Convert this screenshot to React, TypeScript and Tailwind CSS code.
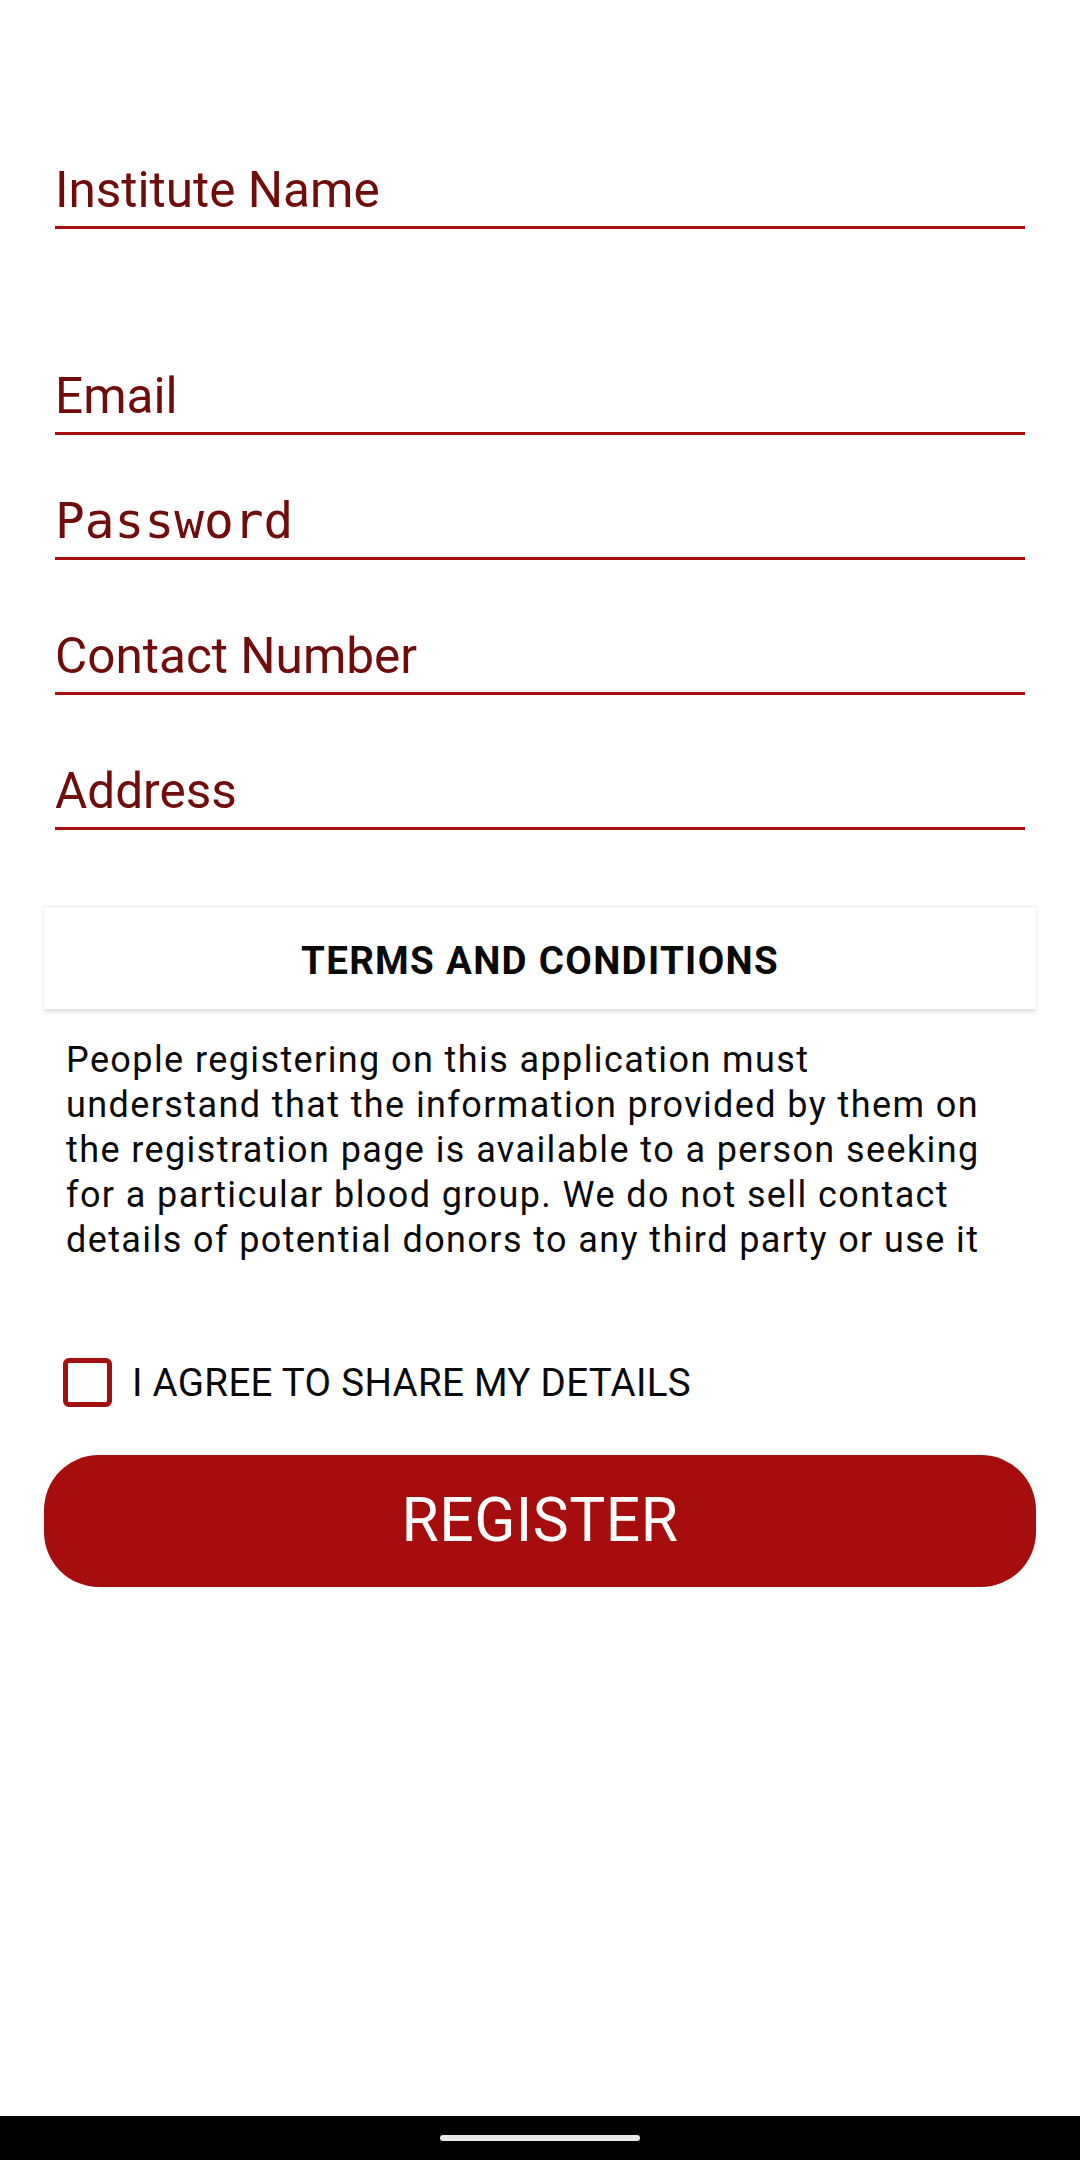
import React from "react";

function Field({ label, mono, mt }: { label: string; mono?: boolean; mt: string }) {
  return (
    <div className={`border-b-[3px] border-[#a90f0f] pb-[7px] ${mt}`}>
      <div
        className={`text-[49.5px] leading-[58px] text-[#700c0c] ${
          mono ? "font-['DejaVu_Sans_Mono',monospace]" : ""
        }`}
      >
        {label}
      </div>
    </div>
  );
}

export default function App() {
  return (
    <div className="w-[1080px] min-h-[2160px] bg-white flex flex-col font-['Roboto',sans-serif]">
      <div className="pt-[161px] ml-[55px] mr-[55px]">
        <Field label="Institute Name" mt="mt-0" />
        <Field label="Email" mt="mt-[138px]" />
        <Field label="Password" mono mt="mt-[57px]" />
        <Field label="Contact Number" mt="mt-[67px]" />
        <Field label="Address" mt="mt-[67px]" />
      </div>

      <div className="mx-[44px] mt-[76px]">
        <div className="border-t border-[#efefef] shadow-[0_3px_4px_rgba(0,0,0,0.13)] pt-[31px] pb-[26px] text-center">
          <div className="text-[38.5px] leading-[45px] font-bold tracking-[1.3px] text-[#0a0a0a]">
            TERMS AND CONDITIONS
          </div>
        </div>

        <div className="mt-[29px] pl-[22px] h-[225px]">
          <p className="w-[930px] text-[36px] leading-[45px] tracking-[1.4px] text-[#0a0a0a]">
            People registering on this application must understand that the information provided by them on the
            registration page is available to a person seeking for a particular blood group. We do not sell contact
            details of potential donors to any third party or use it
          </p>
        </div>

        <div className="mt-[95px] ml-[19px] flex items-center gap-[20px]">
          <div className="w-[49px] h-[49px] rounded-[6px] border-[5px] border-[#a50f0f]" />
          <span className="text-[38.5px] leading-[45px] tracking-[0.3px] text-[#0a0a0a]">I AGREE TO SHARE MY DETAILS</span>
        </div>

        <button className="mt-[48px] w-full h-[132px] rounded-[55px] bg-[#a60d0d] text-white text-[60.5px] tracking-[0.5px] flex items-center justify-center">
          REGISTER
        </button>
      </div>

      <div className="mt-auto h-[44px] bg-black flex items-center justify-center">
        <div className="w-[200px] h-[6px] rounded-full bg-[#e8e8e8]" />
      </div>
    </div>
  );
}
